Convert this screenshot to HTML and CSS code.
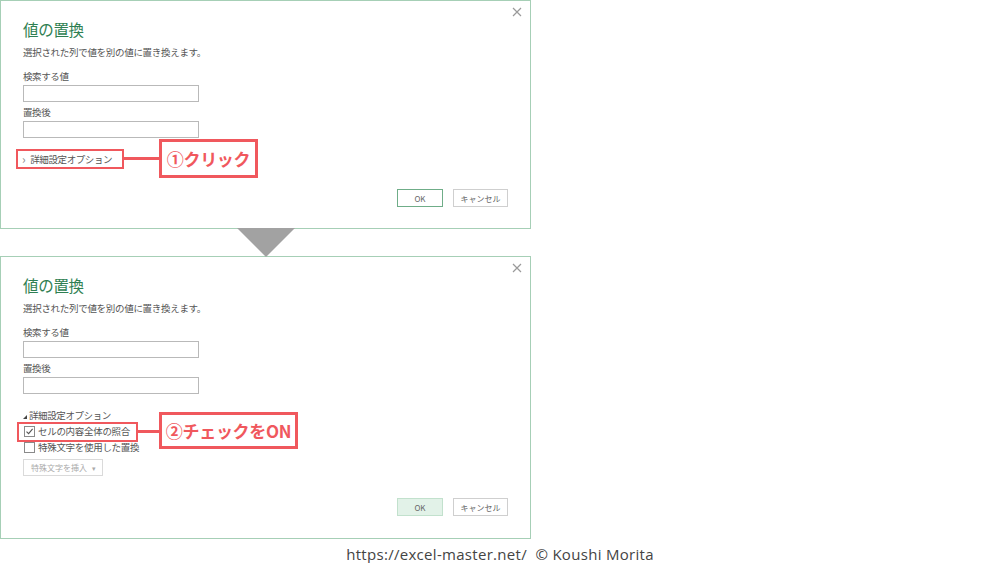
FILE: index.html
```html
<!DOCTYPE html>
<html lang="ja">
<head>
  <meta charset="UTF-8">
  <title>値の置換</title>
  <link rel="stylesheet" href="styles.css">
</head>
<body>
  <div class="dialog first">
    <svg class="close" width="10" height="10" viewBox="0 0 10 10"><path d="M1 1L9 9M9 1L1 9" stroke="#9a9a9a" stroke-width="1.2"/></svg>
    <h1>値の置換</h1>
    <p class="lead">選択された列で値を別の値に置き換えます。</p>
    <label class="label">検索する値</label>
    <div class="input"></div>
    <label class="label second">置換後</label>
    <div class="input"></div>
    <div class="adv"><span class="chev">›</span>詳細設定オプション</div>
    <div class="buttons">
      <button class="ok">OK</button>
      <button class="cancel">キャンセル</button>
    </div>

    <div class="mark mark1"></div>
    <div class="link link1"></div>
    <div class="callout callout1">①クリック</div>
  </div>

  <div class="arrow"></div>

  <div class="dialog second-dlg">
    <svg class="close" width="10" height="10" viewBox="0 0 10 10"><path d="M1 1L9 9M9 1L1 9" stroke="#9a9a9a" stroke-width="1.2"/></svg>
    <h1>値の置換</h1>
    <p class="lead">選択された列で値を別の値に置き換えます。</p>
    <label class="label">検索する値</label>
    <div class="input"></div>
    <label class="label second">置換後</label>
    <div class="input"></div>
    <div class="adv"><span class="tri"></span>詳細設定オプション</div>
    <div class="check first-check">
      <span class="box"><svg width="9" height="9" viewBox="0 0 9 9"><path d="M1.5 4.6L3.6 6.7L7.6 1.8" fill="none" stroke="#555" stroke-width="1.1"/></svg></span>セルの内容全体の照合
    </div>
    <div class="check">
      <span class="box"></span>特殊文字を使用した置換
    </div>
    <div class="insert">特殊文字を挿入 <span class="caret">▾</span></div>
    <div class="buttons">
      <button class="ok filled">OK</button>
      <button class="cancel">キャンセル</button>
    </div>

    <div class="mark mark2"></div>
    <div class="link link2"></div>
    <div class="callout callout2">②チェックをON</div>
  </div>

  <p class="credit">https://excel-master.net/&nbsp; © Koushi Morita</p>
</body>
</html>
```

FILE: styles.css
```css
body {
  margin: 0;
  width: 1000px;
  height: 563px;
  overflow: hidden;
  background: #fff;
  font-family: "Noto Sans CJK JP", "Noto Sans", sans-serif;
  color: #555;
}
.dialog {
  position: relative;
  width: 531px;
  height: 229px;
  box-sizing: border-box;
  border: 1px solid #a6cfb6;
  padding: 0 0 0 22px;
  display: flex;
  flex-direction: column;
  align-items: flex-start;
}
.second-dlg {
  height: 283px;
}
.close {
  position: absolute;
  top: 6px;
  right: 8px;
}
h1 {
  margin: 18px 0 0;
  font-size: 15.5px;
  line-height: 20px;
  font-weight: normal;
  letter-spacing: -0.3px;
  color: #2f7f52;
}
.lead {
  margin: 6px 0 0;
  font-size: 9.5px;
  line-height: 14px;
  letter-spacing: -0.3px;
  color: #555;
}
.label {
  margin-top: 10px;
  font-size: 9.5px;
  line-height: 14px;
  letter-spacing: -0.4px;
  color: #555;
}
.label.second {
  margin-top: 3px;
}
.input {
  margin-top: 2px;
  width: 176px;
  height: 17px;
  box-sizing: border-box;
  border: 1px solid #b9b9b9;
  background: #fff;
}
.adv {
  margin-top: 14px;
  font-size: 9.5px;
  line-height: 14px;
  letter-spacing: -0.4px;
  color: #555;
  display: flex;
  align-items: center;
}
.chev {
  color: #888;
  font-size: 12px;
  margin: -1px 5px 0 -1px;
}
.tri {
  width: 0;
  height: 0;
  border-left: 4px solid transparent;
  border-bottom: 4px solid #444;
  margin: 4px 2px 0 0;
}
.check {
  margin-top: 2px;
  font-size: 9.5px;
  line-height: 14px;
  letter-spacing: -0.3px;
  color: #555;
  display: flex;
  align-items: center;
}
.box {
  width: 11px;
  height: 11px;
  box-sizing: border-box;
  border: 1px solid #8a8a8a;
  margin: 0 3px 0 1px;
  display: flex;
  align-items: center;
  justify-content: center;
  background: #fff;
}
.insert {
  margin-top: 5px;
  height: 17px;
  box-sizing: border-box;
  border: 1px solid #dadada;
  padding: 0 6px 0 7px;
  font-size: 8px;
  line-height: 15px;
  color: #aaa;
}
.caret {
  font-size: 7px;
  margin-left: 3px;
}
.buttons {
  margin: 22px 0 0 374px;
  display: flex;
  gap: 10px;
}
.first .buttons {
  margin-top: 23px;
}
.buttons button {
  height: 18px;
  box-sizing: border-box;
  padding: 0;
  background: #fff;
  font-family: "Noto Sans CJK JP", "Noto Sans", sans-serif;
  font-size: 8px;
  color: #666;
}
.ok {
  width: 46px;
  border: 1.5px solid #6fad88;
}
.ok.filled {
  background: #e2f2e8;
  border: 1px solid #c2e1cd;
}
.cancel {
  width: 55px;
  border: 1px solid #cfcfcf;
}
.arrow {
  width: 0;
  height: 0;
  margin: -1px 0 0 237px;
  border-left: 29px solid transparent;
  border-right: 29px solid transparent;
  border-top: 29px solid #a2a2a2;
  position: relative;
  z-index: 1;
  margin-bottom: -1px;
}
.mark {
  position: absolute;
  box-sizing: border-box;
  border: 2px solid #f0585d;
}
.mark1 {
  left: 15px;
  top: 148px;
  width: 108px;
  height: 20px;
}
.mark2 {
  left: 16px;
  top: 165px;
  width: 121px;
  height: 20px;
}
.link {
  position: absolute;
  height: 3px;
  background: #f0585d;
}
.link1 {
  left: 122px;
  top: 156px;
  width: 38px;
}
.link2 {
  left: 136px;
  top: 173px;
  width: 24px;
}
.callout {
  position: absolute;
  box-sizing: border-box;
  border: 3px solid #f0585d;
  background: #fff;
  color: #f0585d;
  font-weight: bold;
  font-size: 17px;
  letter-spacing: -0.3px;
  display: flex;
  align-items: center;
  justify-content: center;
}
.callout1 {
  left: 158px;
  top: 138px;
  width: 99px;
  height: 39px;
}
.callout2 {
  left: 158px;
  top: 155px;
  width: 139px;
  height: 37px;
}
.credit {
  margin: 6px 0 0;
  text-align: center;
  font-family: "Open Sans", "Noto Sans", sans-serif;
  font-size: 15px;
  line-height: 18px;
  letter-spacing: 0.3px;
  color: #444;
}
```
